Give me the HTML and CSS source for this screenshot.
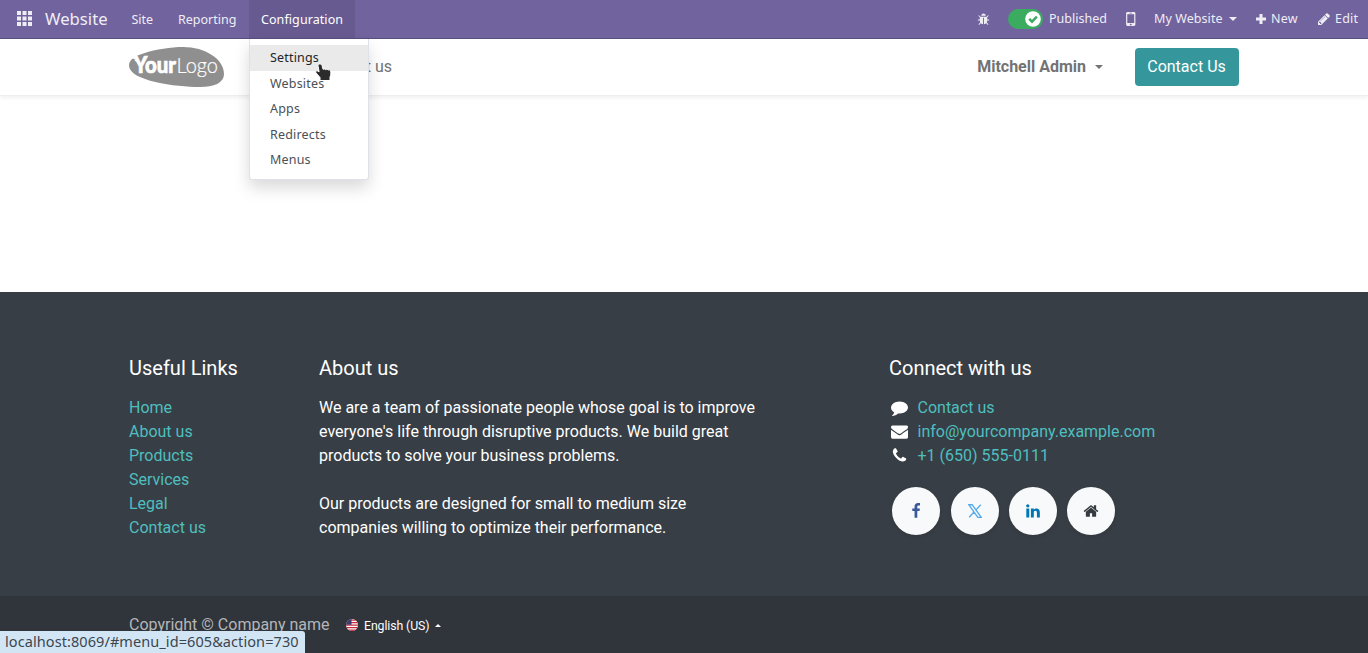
FILE: index.html
```html
<!DOCTYPE html>
<html lang="en">
<head>
<meta charset="utf-8">
<title>Website</title>
<link rel="stylesheet" href="styles.css">
</head>
<body>
<svg class="sprite" width="0" height="0" aria-hidden="true">
  <symbol id="bug" viewBox="0 0 1792 1792"><path d="M1696 960q0 26-19 45t-45 19h-224q0 171-67 290l208 209q19 19 19 45t-19 45q-18 19-45 19t-45-19l-198-197q-5 5-15 13t-42 28.500-65 36.500-82 29-97 13v-896h-128v896q-51 0-101.500-13.500t-87-33-66-39-43.500-32.500l-15-14-183 207q-20 21-48 21-24 0-43-16-19-18-20.500-44.500t15.500-46.500l202-227q-58-114-58-274h-224q-26 0-45-19t-19-45 19-45 45-19h224v-294l-173-173q-19-19-19-45t19-45 45-19 45 19l173 173h844l173-173q19-19 45-19t45 19 19 45-19 45l-173 173v294h224q26 0 45 19t19 45zm-480-576h-640q0-133 93.500-226.500t226.500-93.500 226.500 93.500 93.500 226.500z"/></symbol>
  <symbol id="comment" viewBox="0 0 1792 1792"><path d="M1792 896q0 174-120 321.500t-326 233-450 85.500q-70 0-145-8-198 175-460 242-49 14-114 22-17 2-30.500-9t-17.500-29v-1q-3-4-.5-12t2-10 4.500-9.500l6-9 7-8.500 8-9q7-8 31-34.500t34.500-38 31-39.500 32.500-51 27-59 26-76q-157-89-247.500-220t-90.500-281q0-130 71-248.500t191-204.500 286-136.500 348-50.500q244 0 450 85.500t326 233 120 321.500z"/></symbol>
  <symbol id="envelope" viewBox="0 0 1792 1792"><path d="M1792 710v794q0 66-47 113t-113 47h-1472q-66 0-113-47t-47-113v-794q44 49 101 87 362 246 497 345 57 42 92.500 65.500t94.500 48 110 24.500h2q51 0 110-24.500t94.500-48 92.500-65.500q170-123 498-345 57-39 100-87zm0-294q0 79-49 151t-122 123q-376 261-468 325-10 7-42.500 31t-54 38.500-52 32.500-57.500 27-50 9h-2q-23 0-50-9t-57.500-27-52-32.500-54-38.500-42.500-31q-91-64-262-182.500t-205-142.500q-62-42-117-115.500t-55-136.500q0-78 41.500-130t118.500-52h1472q65 0 112.500 47t47.500 113z"/></symbol>
  <symbol id="phone" viewBox="0 0 1792 1792"><path d="M1600 1240q0 27-10 70.500t-21 68.500q-21 50-122 106-94 51-186 51-27 0-53-3.500t-57.500-12.500-47-14.500-55.500-20.500-49-18q-98-35-175-83-127-79-264-216t-216-264q-48-77-83-175-3-9-18-49t-20.500-55.500-14.500-47-12.500-57.500-3.500-53q0-92 51-186 56-101 106-122 25-11 68.500-21t70.500-10q14 0 21 3 18 6 53 76 11 19 30 54t35 63.500 31 53.500q3 4 17.500 25t21.500 35.500 7 28.500q0 20-28.500 50t-62 55-62 53-28.500 46q0 9 5 22.500t8.500 20.500 14 24 11.500 19q76 137 174 235t235 174q2 1 19 11.500t24 14 20.500 8.500 22.500 5q18 0 46-28.500t53-62 55-62 50-28.500q14 0 28.500 7t35.500 21.500 25 17.500q25 15 53.500 31t63.500 35 54 30q70 35 76 53 3 7 3 21z"/></symbol>
  <symbol id="facebook" viewBox="0 0 1792 1792"><path d="M1343 12v264h-157q-86 0-116 36t-30 108v189h293l-39 296h-254v759h-306v-759h-255v-296h255v-218q0-186 104-288.500t277-102.500q147 0 228 12z"/></symbol>
  <symbol id="linkedin" viewBox="0 0 1792 1792"><path d="M477 625v991h-330v-991h330zm21-306q1 73-50.500 122t-135.500 49h-2q-82 0-132-49t-50-122q0-74 51.500-122.500t134.500-48.500 133 48.500 51 122.500zm1166 729v568h-329v-530q0-105-40.500-164.500t-126.500-59.500q-63 0-105.500 34.500t-63.500 85.500q-11 30-11 81v553h-329q2-399 2-647t-1-296l-1-48h329v144h-2q20-32 41-56t56.500-52 87-43.500 114.500-15.500q171 0 275 113.500t104 332.500z"/></symbol>
  <symbol id="home" viewBox="0 0 1792 1792"><path d="M1472 992v480q0 26-19 45t-45 19h-384v-384h-256v384h-384q-26 0-45-19t-19-45v-480q0-1 .5-3t.5-3l575-474 575 474q1 2 1 6zm223-69l-62 74q-8 9-21 11h-3q-13 0-21-7l-692-577-692 577q-12 8-24 7-13-2-21-11l-62-74q-8-10-7-23.500t11-21.500l719-599q32-26 76-26t76 26l244 204v-195q0-14 9-23t23-9h192q14 0 23 9t9 23v408l219 182q10 8 11 21.500t-7 23.500z"/></symbol>
  <symbol id="pencil" viewBox="0 0 1792 1792"><path d="M491 1536l91-91-235-235-91 91v107h128v128h107zm523-928q0-22-22-22-10 0-17 7l-542 542q-7 7-7 17 0 22 22 22 10 0 17-7l542-542q7-7 7-17zm-54-192l416 416-832 832h-416v-416zm683 96q0 53-37 90l-166 166-416-416 166-165q36-38 90-38 53 0 91 38l235 234q37 39 37 91z"/></symbol>
</svg>

<nav class="topbar">
  <svg class="apps" width="15" height="15" viewBox="0 0 15 15"><path d="M0 0h4v4H0zM5.500 0h4v4h-4zM11 0h4v4h-4zM0 5.500h4v4H0zM5.500 5.500h4v4h-4zM11 5.500h4v4h-4zM0 11h4v4H0zM5.500 11h4v4h-4zM11 11h4v4h-4z"/></svg>
  <span class="brand">Website</span>
  <a class="item site">Site</a>
  <a class="item reporting">Reporting</a>
  <a class="item config">Configuration</a>
  <div class="systray">
    <svg class="bug" width="13" height="13"><use href="#bug"/></svg>
    <span class="switch"><svg width="16" height="16" viewBox="0 0 16 16"><circle cx="8" cy="8" r="7.800" fill="#fff"/><path d="M4.200 7.900l2.800 2.800 4.800-5" fill="none" stroke="#3aab5f" stroke-width="2.400"/></svg></span>
    <span class="published">Published</span>
    <svg class="mobile" width="10" height="14" viewBox="0 0 10 14"><path fill-rule="evenodd" d="M1.500 0h6.500q1.400 0 1.400 1.400v11.200q0 1.400-1.400 1.400H1.500Q.1 14 .1 12.600V1.400Q.1 0 1.500 0zM1.300 2.300v8.800h6.900V2.300zM3.600.8v.6h2.300V.8zM4.750 11.700a.85.85 0 1 0 .01 0z"/></svg>
    <span class="mywebsite">My Website</span><i class="caret"></i>
    <svg class="plus" width="10" height="10" viewBox="0 0 10 10"><path d="M3.500 0h3v3.500H10v3H6.500V10h-3V6.500H0v-3h3.500z"/></svg>
    <span class="new">New</span>
    <svg class="pencil" width="14" height="14"><use href="#pencil"/></svg>
    <span class="edit">Edit</span>
  </div>
</nav>

<div class="menu">
  <a class="active">Settings</a>
  <a class="m2">Websites</a>
  <a class="m3">Apps</a>
  <a class="m4">Redirects</a>
  <a class="m5">Menus</a>
</div>
<svg class="pointer" width="17" height="19" viewBox="0 0 17 19"><path d="M4.500 1C3.200 1 2.900 2 3.100 3.200l1 5.600-1.600-.9C1.200 7.300.2 8.700 1 9.900l4 4.600V17.500h10v-3.400c.9-1.800 1-3.900.6-6-.3-1.300-1.700-1.600-2.500-1-.5-.9-1.800-1-2.500-.4-.6-.8-1.700-.9-2.500-.3L7 2.300C6.700 1.400 5.600 1 4.500 1z" fill="#2b2b2b" stroke="#fff" stroke-width="1"/></svg>

<header class="site-header">
  <div class="container">
    <svg class="logo" width="95" height="40" viewBox="0 0 95 40">
      <path d="M0 18.500C0 12 7 8.800 15 6.200 27 2.300 42 0 54 0c22 0 41 12 41 27 0 9-10 13-24 13C47 40 0 34 0 18.500z" fill="#8f8f8f"/>
      <path d="M3 11l3-1v2.500zM5.500 14l2-3 3 4z" fill="#fff"/>
      <text x="5" y="26" class="logo-bold" textLength="42" lengthAdjust="spacingAndGlyphs">Your</text>
      <text x="47.500" y="26" class="logo-thin" textLength="41.500" lengthAdjust="spacingAndGlyphs">Logo</text>
    </svg>
    <a class="nav-link">Contact us</a>
    <a class="user">Mitchell Admin<i class="caret"></i></a>
    <a class="cta">Contact Us</a>
  </div>
</header>
<main class="content"></main>

<footer class="footer">
  <div class="container columns">
    <section class="links">
      <h5>Useful Links</h5>
      <a>Home</a><a>About us</a><a>Products</a><a>Services</a><a>Legal</a><a>Contact us</a>
    </section>
    <section class="about">
      <h5>About us</h5>
      <p>We are a team of passionate people whose goal is to improve<br>everyone's life through disruptive products. We build great<br>products to solve your business problems.</p>
      <p class="second">Our products are designed for small to medium size<br>companies willing to optimize their performance.</p>
    </section>
    <section class="connect">
      <h5>Connect with us</h5>
      <a><svg width="17" height="17"><use href="#comment"/></svg>Contact us</a>
      <a><svg width="17" height="17"><use href="#envelope"/></svg>info@yourcompany.example.com</a>
      <a><svg width="17" height="17"><use href="#phone"/></svg>+1 (650) 555-0111</a>
      <div class="social">
        <span class="fb"><svg width="16" height="16"><use href="#facebook"/></svg></span>
        <span class="x"><svg width="14" height="14" viewBox="0 0 14 14"><path d="M.8.700h3.400l9 12.600H9.800zM12.700.700L7.800 6.100M6 8L1.200 13.300" fill="none" stroke="#55acee" stroke-width="1.350"/></svg></span>
        <span class="in"><svg width="16" height="16"><use href="#linkedin"/></svg></span>
        <span class="hm"><svg width="16" height="16"><use href="#home"/></svg></span>
      </div>
    </section>
  </div>
</footer>
<div class="copyright">
  <div class="container">
    <span class="company">Copyright © Company name</span>
    <svg class="flag" width="12" height="12" viewBox="0 0 12 12"><clipPath id="round"><circle cx="6" cy="6" r="6"/></clipPath><g clip-path="url(#round)"><path fill="#fff" d="M0 0h12v12H0z"/><path fill="#c8283c" d="M0 .5h12v1.300H0zM0 3h12v1.300H0zM0 5.500h12v1.300H0zM0 8h12v1.300H0zM0 10.500h12v1.500H0z"/><path fill="#3c3b6e" d="M0 0h5.500v5.800H0z"/></g></svg>
    <span class="lang">English (US)</span><i class="caret up"></i>
  </div>
</div>
<div class="status"><span>localhost:8069/#menu_id=605&amp;action=730</span></div>
</body>
</html>
```
FILE: styles.css
```css
* { box-sizing: border-box; }
body {
  margin: 0;
  height: 653px;
  overflow: hidden;
  background: #fff;
  font: 16px/24px Roboto, sans-serif;
}
svg { display: block; flex: none; fill: currentColor; }
.sprite { position: absolute; }
.container { display: flex; width: 1110px; margin-left: 129px; }

.topbar, .menu, .status { font-family: "Noto Sans", sans-serif; white-space: nowrap; }
.topbar {
  display: flex;
  align-items: center;
  height: 39px;
  padding-left: 17px;
  background: #71639e;
  border-bottom: 1px solid #5a4f7f;
  color: #efedf4;
  font-size: 12.5px;
  line-height: 40px;
}
.apps { margin-top: -2px; }
.brand { width: 86px; padding-left: 13px; font-size: 16.7px; line-height: 38px; }
.item { flex: none; height: 38px; }
.site { width: 47px; margin-left: 13px; padding-left: .5px; }
.reporting { width: 71px; }
.config { width: 106px; padding-left: 12px; background: #675a91; color: #fff; letter-spacing: .08px; }
.systray { display: flex; align-items: center; flex: 1; height: 38px; }
.systray span { flex: none; }
.bug { margin-left: 622px; }
.systray .switch {
  width: 35px;
  height: 20px;
  margin-left: 18px;
  padding: 2px 1px 2px 17px;
  border-radius: 10px;
  background: #3aab5f;
}
.published { width: 77px; margin-left: 6px; }
.mobile { width: 10px; }
.mywebsite { width: 70px; margin-left: 18px; letter-spacing: .08px; }
.caret { display: block; flex: none; border: 4px solid transparent; border-top-color: currentColor; border-bottom: 0; }
.mywebsite + .caret { margin-left: 5px; }
.plus { margin-left: 19px; }
.new { width: 46px; margin-left: 5px; letter-spacing: .2px; }
.edit { margin-left: 4px; letter-spacing: .2px; }

.menu {
  position: absolute;
  z-index: 2;
  left: 249px;
  top: 39px;
  width: 120px;
  height: 141px;
  padding-top: 6px;
  background: #fff;
  border: 1px solid #dee2e6;
  border-top: 0;
  border-radius: 0 0 3px 3px;
  box-shadow: 0 8px 16px rgba(0, 0, 0, .15);
  color: #495057;
  font-size: 12.5px;
  letter-spacing: .18px;
  line-height: 25.5px;
}
.menu a { display: block; height: 25.5px; padding-left: 20px; }
.menu .active { background: #eaeaea; color: #212529; }
.pointer { position: absolute; z-index: 3; left: 315px; top: 63px; }

.site-header { height: 57px; border-bottom: 1px solid #eee; box-shadow: 0 2px 4px rgba(0, 0, 0, .06); }
.site-header .container { height: 56px; align-items: center; color: #737373; }
.logo-bold { font: 900 22px Lato, sans-serif; fill: #fff; stroke: #fff; stroke-width: .7px; }
.logo-thin { font: 300 22px Lato, sans-serif; fill: #fff; stroke: #fff; stroke-width: .2px; }
.nav-link { width: 77px; margin-left: 91px; white-space: nowrap; }
.user { display: flex; align-items: center; gap: 9px; margin-left: auto; font-weight: 700; }
.cta {
  width: 104px;
  height: 38px;
  margin-left: 32px;
  padding-right: 1px;
  border-radius: 4px;
  background: #35979c;
  color: #fff;
  line-height: 38px;
  text-align: center;
}
.content { height: 196px; }

.footer { height: 304px; padding-top: 64px; background: #383e45; color: #fff; }
h5 { margin: 0 0 16px; font-size: 20px; line-height: 24px; font-weight: 400; }
p { margin: 0; }
.second { margin-top: 24px; }
.footer section > a { display: block; height: 24px; color: #4ebfbf; }
.links { width: 190px; }
.about { width: 570px; }
.connect > a { white-space: nowrap; }
.footer .connect > a { display: flex; align-items: center; gap: 9.5px; padding-left: 2px; }
.connect > a svg { margin-bottom: 1px; fill: #fff; }
.social { display: flex; gap: 10.4px; margin: 19px 0 0 3px; }
.social span {
  display: flex;
  align-items: center;
  justify-content: center;
  width: 48px;
  height: 48px;
  border-radius: 50%;
  background: #f8f9fa;
  box-shadow: 0 2px 4px rgba(0, 0, 0, .1);
}
.social .x { margin: 0 -.5px 0 .5px; }
.fb { color: #3b5998; }
.in { color: #0077b5; }
.hm { color: #343a40; }

.copyright { height: 57px; padding-top: 16px; background: #30343b; color: #b4b6b8; }
.copyright .container { height: 26px; align-items: center; }
.company { width: 217px; margin-top: -1px; white-space: nowrap; }
.lang { margin-left: 6px; padding-top: 1px; color: #fff; font-size: 12.3px; letter-spacing: -.1px; }
.up { margin-left: 6px; border-width: 3px; border-top: 0; border-bottom: 3px solid #fff; }

.status {
  position: absolute;
  left: 0;
  bottom: 0;
  width: 305px;
  height: 22px;
  padding-left: 5px;
  border-radius: 0 3px 0 0;
  background: #d2e5f5;
  color: #3b464f;
  font-size: 14.5px;
  letter-spacing: .08px;
  line-height: 21px;
}
```
